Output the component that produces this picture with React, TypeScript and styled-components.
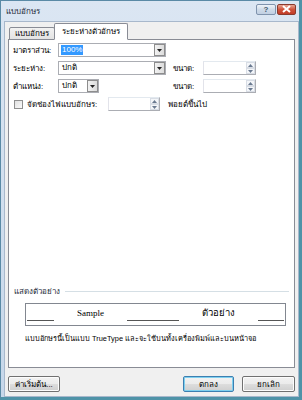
import styled, { createGlobalStyle } from "styled-components";

const Global = createGlobalStyle`
  html, body { margin: 0; padding: 0; background: #ffffff; }
  body { font-family: "Liberation Sans", "Noto Sans", "DejaVu Sans", sans-serif; }
`;

export default function App() {
  return (
    <>
      <Global />
      <Window>
        <TitleBar>
          <TitleText>แบบอักษร</TitleText>
          <CaptionButtons>
            <CaptionButton>?</CaptionButton>
            <CaptionButton $close>
              <svg width="9" height="8" viewBox="0 0 9 8">
                <path d="M1 1 L8 7 M8 1 L1 7" stroke="#fff" strokeWidth="2" />
              </svg>
            </CaptionButton>
          </CaptionButtons>
        </TitleBar>
        <Body>
          <Tabs>
            <Tab>แบบอักษร</Tab>
            <Tab $active>ระยะห่างตัวอักษร</Tab>
          </Tabs>
          <Panel>
            <Fields>
              <FieldRow>
                <Label>มาตราส่วน:</Label>
                <Combo $width={108}>
                  <ComboText $selected>100%</ComboText>
                  <DropArrow />
                </Combo>
              </FieldRow>
              <FieldRow>
                <Label>ระยะห่าง:</Label>
                <Combo $width={108}>
                  <ComboText>ปกติ</ComboText>
                  <DropArrow />
                </Combo>
                <SizeLabel>ขนาด:</SizeLabel>
                <Spin $width={53} />
              </FieldRow>
              <FieldRow>
                <Label>ตำแหน่ง:</Label>
                <Combo $width={41}>
                  <ComboText>ปกติ</ComboText>
                  <DropArrow />
                </Combo>
                <Gap $width={67} />
                <SizeLabel>ขนาด:</SizeLabel>
                <Spin $width={53} />
              </FieldRow>
              <FieldRow>
                <Check />
                <KerningLabel>จัดช่องไฟแบบอักษร:</KerningLabel>
                <Spin $width={52} />
                <PointLabel>พอยต์ขึ้นไป</PointLabel>
              </FieldRow>
            </Fields>
            <Preview>
              <GroupTitle>แสดงตัวอย่าง</GroupTitle>
              <PreviewBox>
                <Rule $width={27} />
                <SampleLatin>Sample</SampleLatin>
                <Rule $width={52} />
                <SampleThai>ตัวอย่าง</SampleThai>
                <Rule $width={26} />
              </PreviewBox>
              <Note>แบบอักษรนี้เป็นแบบ TrueType และจะใช้บนทั้งเครื่องพิมพ์และบนหน้าจอ</Note>
            </Preview>
          </Panel>
          <Footer>
            <Button $width={52}>ค่าเริ่มต้น...</Button>
            <FooterRight>
              <Button $width={51} $default>ตกลง</Button>
              <Button $width={53}>ยกเลิก</Button>
            </FooterRight>
          </Footer>
        </Body>
      </Window>
    </>
  );
}

function DropArrow() {
  return (
    <ArrowBox>
      <svg width="5" height="3" viewBox="0 0 5 3">
        <path d="M0 0 H5 L2.5 3 Z" fill="#222" />
      </svg>
    </ArrowBox>
  );
}

function Spin({ $width }: { $width: number }) {
  return (
    <SpinBox $width={$width}>
      <SpinButtons>
        <SpinHalf>
          <svg width="5" height="3" viewBox="0 0 5 3">
            <path d="M0 3 H5 L2.5 0 Z" fill="#6a7a90" />
          </svg>
        </SpinHalf>
        <SpinHalf>
          <svg width="5" height="3" viewBox="0 0 5 3">
            <path d="M0 0 H5 L2.5 3 Z" fill="#6a7a90" />
          </svg>
        </SpinHalf>
      </SpinButtons>
    </SpinBox>
  );
}

const Window = styled.div`
  width: 302px;
  height: 400px;
  box-sizing: border-box;
  display: flex;
  flex-direction: column;
  background: linear-gradient(#dbe6f3, #c6d7ea);
  border: 1px solid #5a8aa6;
  border-right: 3px solid #4f93a8;
  border-bottom: 3px solid #4f93a8;
  font-size: 8px;
  color: #000;
`;

const TitleBar = styled.div`
  height: 20px;
  display: flex;
  align-items: center;
  justify-content: space-between;
  padding: 0 3px 0 5px;
`;

const TitleText = styled.span`
  font-size: 8px;
  color: #1e2a3a;
`;

const CaptionButtons = styled.div`
  display: flex;
  gap: 1px;
  margin-top: -4px;
`;

const CaptionButton = styled.div<{ $close?: boolean }>`
  width: ${(p) => (p.$close ? 19 : 20)}px;
  height: 11px;
  display: flex;
  align-items: center;
  justify-content: center;
  box-sizing: border-box;
  border: 1px solid ${(p) => (p.$close ? "#8a3a2e" : "#7f93ad")};
  border-radius: 2px;
  background: ${(p) =>
    p.$close
      ? "linear-gradient(#e8a593, #d0533c 50%, #c13c28)"
      : "linear-gradient(#eef3f9, #cfdbe9 50%, #c0cfe2)"};
  color: #44586e;
  font-size: 8px;
  font-weight: bold;
`;

const Body = styled.div`
  flex: 1;
  display: flex;
  flex-direction: column;
  background: #f0f0f0;
  margin: 0 0 0 3px;
  border: 1px solid #a8b8cc;
  padding: 1px 3px 4px 3px;
`;

const Tabs = styled.div`
  display: flex;
  align-items: flex-end;
  padding-left: 1px;
  height: 17px;
  margin-bottom: -1px;
  position: relative;
  z-index: 1;
`;

const Tab = styled.div<{ $active?: boolean }>`
  height: ${(p) => (p.$active ? 17 : 13)}px;
  box-sizing: border-box;
  padding: 0 ${(p) => (p.$active ? 7 : 5)}px;
  display: flex;
  align-items: center;
  border: 1px solid #898c95;
  border-bottom: ${(p) => (p.$active ? "1px solid #fff" : "1px solid #898c95")};
  margin-left: ${(p) => (p.$active ? -1 : 0)}px;
  background: ${(p) => (p.$active ? "#fff" : "linear-gradient(#f2f2f2, #e3e3e3)")};
  border-radius: 2px 2px 0 0;
  font-size: 8px;
`;

const Panel = styled.div`
  flex: 1;
  display: flex;
  flex-direction: column;
  justify-content: space-between;
  background: #fff;
  border: 1px solid #898c95;
  padding: 3px 5px 23px 4px;
`;

const Fields = styled.div`
  display: flex;
  flex-direction: column;
  gap: 4px;
`;

const FieldRow = styled.div`
  display: flex;
  align-items: center;
  height: 14px;
`;

const Label = styled.span`
  width: 45px;
  font-size: 8px;
`;

const SizeLabel = styled.span`
  width: 30px;
  margin-left: 7px;
  font-size: 8px;
`;

const KerningLabel = styled.span`
  width: 81px;
  margin-left: 4px;
  font-size: 8px;
`;

const PointLabel = styled.span`
  margin-left: 8px;
  font-size: 8px;
`;

const Gap = styled.div<{ $width: number }>`
  width: ${(p) => p.$width}px;
`;

const Combo = styled.div<{ $width: number }>`
  width: ${(p) => p.$width}px;
  height: 14px;
  box-sizing: border-box;
  display: flex;
  align-items: center;
  justify-content: space-between;
  border: 1px solid #abadb3;
  background: #fff;
  padding-left: 2px;
`;

const ComboText = styled.span<{ $selected?: boolean }>`
  font-size: 8px;
  padding: 0 1px;
  line-height: 10px;
  background: ${(p) => (p.$selected ? "#3399ff" : "transparent")};
  color: ${(p) => (p.$selected ? "#fff" : "#000")};
`;

const ArrowBox = styled.div`
  width: 11px;
  height: 12px;
  box-sizing: border-box;
  display: flex;
  align-items: center;
  justify-content: center;
  border: 1px solid #8d8d8d;
  background: linear-gradient(to right, #f2f2f2, #dcdcdc);
`;

const SpinBox = styled.div<{ $width: number }>`
  width: ${(p) => p.$width}px;
  height: 14px;
  box-sizing: border-box;
  display: flex;
  justify-content: flex-end;
  border: 1px solid #abadb3;
  border-top-color: #e3e9ef;
  border-left-color: #e2e3ea;
  background: #fff;
`;

const SpinButtons = styled.div`
  width: 9px;
  display: flex;
  flex-direction: column;
`;

const SpinHalf = styled.div`
  flex: 1;
  display: flex;
  align-items: center;
  justify-content: center;
  border: 1px solid #d8dde5;
  background: #f4f6f9;
`;

const Check = styled.div`
  width: 9px;
  height: 9px;
  box-sizing: border-box;
  border: 1px solid #8f8f8f;
  background: linear-gradient(135deg, #e0e0e0, #fafafa);
  margin-left: 1px;
`;

const Preview = styled.div`
  display: flex;
  flex-direction: column;
  padding-left: 1px;
`;

const GroupTitle = styled.div`
  display: flex;
  align-items: center;
  gap: 5px;
  font-size: 8px;
  color: #1e2a3a;
  margin-bottom: 5px;
  &::after {
    content: "";
    flex: 1;
    border-top: 1px solid #d5dfe5;
  }
`;

const PreviewBox = styled.div`
  margin: 0 3px 0 11px;
  height: 23px;
  box-sizing: border-box;
  border: 1px solid #828790;
  display: flex;
  align-items: flex-end;
  justify-content: space-between;
  padding: 0 1px 4px 1px;
`;

const Rule = styled.div<{ $width: number }>`
  width: ${(p) => p.$width}px;
  border-top: 1px solid #555;
`;

const SampleLatin = styled.span`
  font-family: "Liberation Serif", serif;
  font-size: 9px;
  line-height: 9px;
  margin-bottom: 3px;
`;

const SampleThai = styled.span`
  font-size: 9.5px;
  line-height: 10px;
  margin-bottom: 3px;
`;

const Note = styled.div`
  margin: 6px 0 0 11px;
  font-size: 7.4px;
`;

const Footer = styled.div`
  display: flex;
  justify-content: space-between;
  align-items: center;
  padding-top: 8px;
`;

const FooterRight = styled.div`
  display: flex;
  gap: 8px;
`;

const Button = styled.div<{ $width: number; $default?: boolean }>`
  width: ${(p) => p.$width}px;
  height: 16px;
  box-sizing: border-box;
  display: flex;
  align-items: center;
  justify-content: center;
  border: 1px solid ${(p) => (p.$default ? "#3c7fb1" : "#707070")};
  border-radius: 2px;
  background: linear-gradient(#f2f2f2 0%, #ebebeb 50%, #dddddd 51%, #cfcfcf 100%);
  box-shadow: ${(p) => (p.$default ? "inset 0 0 0 1px #7fd0ef" : "inset 0 0 0 1px #fcfcfc")};
  font-size: 8px;
`;
